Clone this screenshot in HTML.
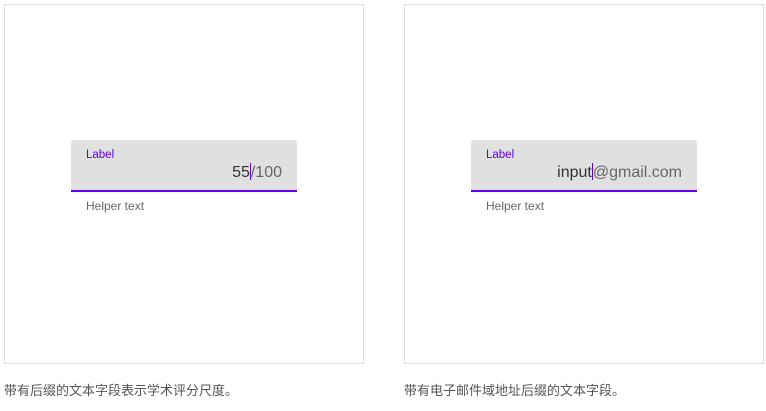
<!DOCTYPE html>
<html><head><meta charset="utf-8"><style>
body{margin:0;width:766px;height:411px;background:#fff;position:relative;overflow:hidden;font-family:"Liberation Sans","Noto Sans CJK SC",sans-serif}
.box{position:absolute;top:4px;width:358px;height:358px;border:1px solid #ddd}
.f{position:absolute;top:140px;width:226px;height:50px;background:#e0e0e0;border-radius:4px 4px 0 0;border-bottom:2px solid #6200ee}
.lab{position:absolute;left:15px;top:9px;font-size:11.5px;color:#6200ee}
.val{position:absolute;right:15px;top:23px;font-size:16px;color:#333;white-space:nowrap}
.suf{color:#666}
.cur{display:inline-block;width:1px;height:17px;background:#6200ee;vertical-align:-3px}
.help{position:absolute;top:199px;font-size:12px;color:#666}
.cap{position:absolute;top:380px;font-size:13px;color:#555}
</style></head><body>
<div class="box" style="left:4px"></div>
<div class="box" style="left:404px"></div>
<div class="f" style="left:71px"><div class="lab">Label</div><div class="val">55<span class="cur"></span><span class="suf">/100</span></div></div>
<div class="help" style="left:86px">Helper text</div>
<div class="f" style="left:471px"><div class="lab">Label</div><div class="val">input<span class="cur"></span><span class="suf">@gmail.com</span></div></div>
<div class="help" style="left:486px">Helper text</div>
<div class="cap" style="left:4px">带有后缀的文本字段表示学术评分尺度。</div>
<div class="cap" style="left:404px">带有电子邮件域地址后缀的文本字段。</div>
</body></html>
